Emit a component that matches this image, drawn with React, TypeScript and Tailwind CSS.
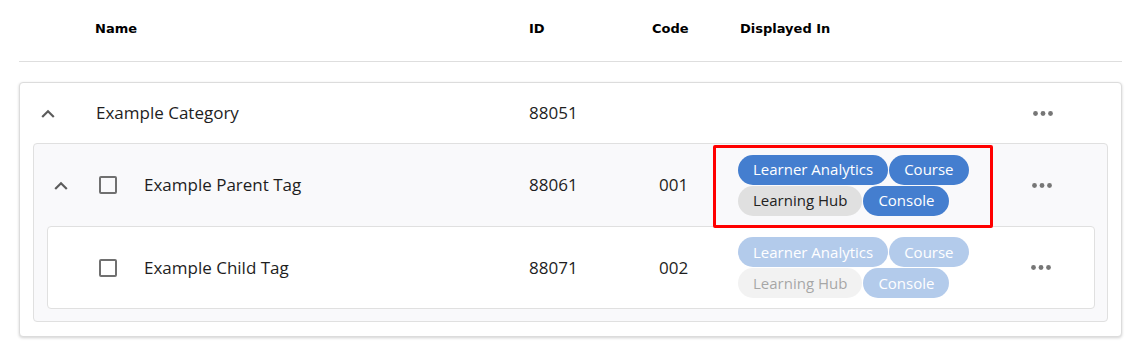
import React from "react";

const bodyFont = { fontFamily: '"Open Sans", "Noto Sans", sans-serif' };

function Chevron() {
  return (
    <svg width="14" height="9" viewBox="0 0 14 9" className="block">
      <path d="M1.2 8 L7 2.2 L12.8 8" fill="none" stroke="#5c5c5c" strokeWidth="2.2" />
    </svg>
  );
}

function Dots() {
  return (
    <svg width="20" height="5" viewBox="0 0 20 5" className="block">
      <circle cx="2.5" cy="2.5" r="2.4" fill="#767676" />
      <circle cx="10" cy="2.5" r="2.4" fill="#767676" />
      <circle cx="17.5" cy="2.5" r="2.4" fill="#767676" />
    </svg>
  );
}

function Checkbox() {
  return <div className="h-[18px] w-[18px] shrink-0 rounded-[2px] border-2 border-[#707070]" />;
}

function Chips({ faded }: { faded?: boolean }) {
  return (
    <div className={`flex w-[260px] flex-wrap gap-x-[1px] gap-y-[1px] ${faded ? "opacity-40" : ""}`}>
      <span className="flex h-[30px] items-center rounded-full bg-[#447ecf] px-[15px] text-[15px] text-white">
        Learner Analytics
      </span>
      <span className="flex h-[30px] items-center rounded-full bg-[#447ecf] px-[15px] text-[15px] text-white">
        Course
      </span>
      <span className="flex h-[30px] items-center rounded-full bg-[#e0e0e0] px-[15px] text-[15px] text-[#222]">
        Learning Hub
      </span>
      <span className="flex h-[30px] items-center rounded-full bg-[#447ecf] px-[15px] text-[15px] text-white">
        Console
      </span>
    </div>
  );
}

export default function App() {
  return (
    <div className="h-[361px] w-[1144px] bg-white">
      <div className="ml-[19px] w-[1103px]">
        {/* header */}
        <div
          className="flex h-[62px] items-center border-b border-[#dedede] pb-[3px] text-[13px] font-bold text-black"
          style={{ fontFamily: '"DejaVu Sans", Verdana, sans-serif' }}
        >
          <div className="w-[76px]" />
          <div className="w-[434px]">Name</div>
          <div className="w-[123px]">ID</div>
          <div className="w-[88px]">Code</div>
          <div>Displayed In</div>
        </div>

        {/* outer card */}
        <div
          className="mt-[20px] rounded-[4px] border border-[#dcdcdc] bg-white pb-[14px] text-[17px] text-[#1e1e1e] shadow-[0_1px_3px_rgba(0,0,0,0.18)]"
          style={bodyFont}
        >
          {/* category row */}
          <div className="flex h-[60px] items-center">
            <div className="flex w-[509px] items-center">
              <div className="w-[76px] pl-[21px]">
                <Chevron />
              </div>
              <span>Example Category</span>
            </div>
            <div className="w-[130px]">88051</div>
            <div className="w-[79px]" />
            <div className="w-[295px]" />
            <Dots />
          </div>

          {/* parent card */}
          <div className="mx-[13px] rounded-[4px] border border-[#e0e0e0] bg-[#f9f9fb] pb-[12px]">
            <div className="flex h-[82px] items-center">
              <div className="flex w-[495px] items-center">
                <div className="w-[65px] pl-[20px]">
                  <Chevron />
                </div>
                <Checkbox />
                <span className="ml-[27px]">Example Parent Tag</span>
              </div>
              <div className="w-[130px]">88061</div>
              <div className="w-[79px]">001</div>
              <div className="w-[294px]">
                <div className="relative w-[260px]">
                  <Chips />
                  <div className="pointer-events-none absolute -left-[25px] -top-[10px] h-[83px] w-[280px] rounded-[2px] border-[3px] border-[#ff0000]" />
                </div>
              </div>
              <Dots />
            </div>

            {/* child card */}
            <div className="ml-[13px] mr-[12px] rounded-[4px] border border-[#e0e0e0] bg-white">
              <div className="flex h-[81px] items-center">
                <div className="flex w-[481px] items-center pl-[51px]">
                  <Checkbox />
                  <span className="ml-[27px]">Example Child Tag</span>
                </div>
                <div className="w-[130px]">88071</div>
                <div className="w-[79px]">002</div>
                <div className="w-[293px]">
                  <Chips faded />
                </div>
                <Dots />
              </div>
            </div>
          </div>
        </div>
      </div>
    </div>
  );
}
